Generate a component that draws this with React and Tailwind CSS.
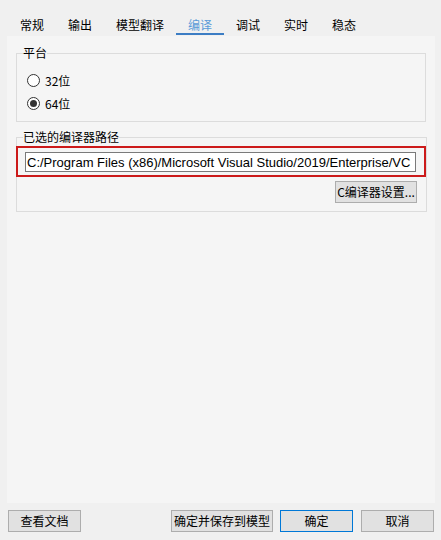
import { useState } from 'react';

const tabs = ['常规', '输出', '模型翻译', '编译', '调试', '实时', '稳态'];

function Radio({ checked, label, onClick }) {
  return (
    <div className="flex items-center h-[23px] pl-[10px] cursor-default" onClick={onClick}>
      <span className="w-[13px] h-[13px] rounded-full border border-[#333] bg-white flex items-center justify-center">
        {checked && <span className="w-[7px] h-[7px] rounded-full bg-[#333]" />}
      </span>
      <span className="ml-[5px] leading-[16px]">{label}</span>
    </div>
  );
}

function App() {
  const [tab, setTab] = useState('编译');
  const [arch, setArch] = useState('64');
  const [path, setPath] = useState('C:/Program Files (x86)/Microsoft Visual Studio/2019/Enterprise/VC');

  return (
    <div className="w-[441px] h-[540px] bg-[#f0f0f0] flex flex-col text-[12px] text-black font-['Noto_Sans_CJK_SC','Liberation_Sans',sans-serif]">
      <div className="flex h-[36px] pl-[8px]">
        {tabs.map((t) => (
          <div
            key={t}
            onClick={() => setTab(t)}
            className={
              'h-[35px] px-[12px] flex items-end leading-[16px] border-b-2 cursor-default ' +
              (t === tab ? 'border-[#3c7dc4] text-[#5a9bd8]' : 'border-transparent')
            }
          >
            {t}
          </div>
        ))}
      </div>

      <div className="ml-[7px] w-[428px] h-[467px] bg-[#f5f5f5] pt-[9px]">
        <fieldset className="ml-[9px] w-[410px] border border-[#dcdcdc] pb-[6px]">
          <legend className="ml-[6px] leading-[16px]">平台</legend>
          <div className="pt-[8px]">
            <Radio checked={arch === '32'} label="32位" onClick={() => setArch('32')} />
            <Radio checked={arch === '64'} label="64位" onClick={() => setArch('64')} />
          </div>
        </fieldset>

        <fieldset className="mt-[7px] ml-[9px] w-[410px] border border-[#dcdcdc] pb-[8px]">
          <legend className="ml-[6px] leading-[16px]">已选的编译器路径</legend>
          <div className="-ml-px mt-px w-[410px] h-[31px] border-2 border-[#cc1a1a] pt-[4px] pl-[7px]">
            <input
              value={path}
              onChange={(e) => setPath(e.target.value)}
              className="w-[391px] h-[20px] bg-white border border-[#7a7a7a] px-px text-[13px] font-['Liberation_Sans',sans-serif] outline-none"
            />
          </div>
          <div className="flex justify-end pr-[9px] mt-[4px]">
            <button className="w-[82px] h-[22px] bg-[#e1e1e1] border border-[#adadad] leading-[16px] whitespace-nowrap">
              C编译器设置...
            </button>
          </div>
        </fieldset>
      </div>

      <div className="flex mt-[7px] h-[22px]">
        <button className="ml-[8px] w-[73px] h-[22px] bg-[#e1e1e1] border border-[#adadad]">查看文档</button>
        <button className="ml-[90px] w-[102px] h-[22px] bg-[#e1e1e1] border border-[#adadad]">确定并保存到模型</button>
        <button className="ml-[7px] w-[73px] h-[22px] bg-[#e1e1e1] border border-[#0078d7]">确定</button>
        <button className="ml-[8px] w-[73px] h-[22px] bg-[#e1e1e1] border border-[#adadad]">取消</button>
      </div>
    </div>
  );
}

export default App;
